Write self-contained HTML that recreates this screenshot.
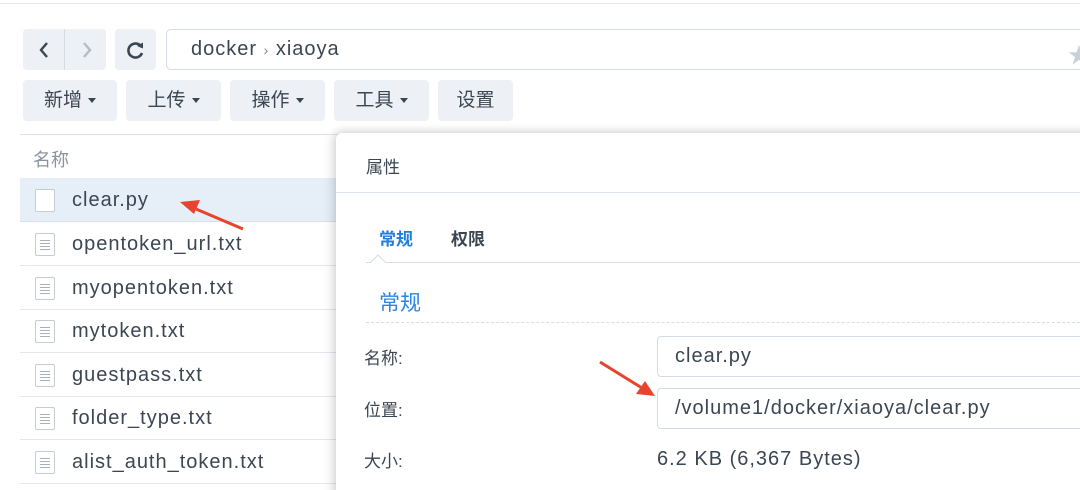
<!DOCTYPE html>
<html><head><meta charset="utf-8"><style>
*{box-sizing:border-box;margin:0;padding:0}
html,body{width:1080px;height:490px;overflow:hidden}
body{background:#fff;font-family:"Liberation Sans","Noto Sans CJK SC",sans-serif;color:#3b4653;position:relative}
.a{position:absolute}
.btn{position:absolute;background:#edf0f4;border-radius:4px;height:41px;top:80px;font-size:19px;line-height:41px;text-align:center;color:#3b4653}
.caret{display:inline-block;width:0;height:0;border-left:4px solid transparent;border-right:4px solid transparent;border-top:5px solid #3b4653;vertical-align:middle;margin-left:6px}
.row{position:absolute;left:20px;width:316px;height:44px;border-bottom:1px solid #e3e8ee;font-size:20px;letter-spacing:1px;line-height:44px;padding-left:52px;color:#3b4653}
.ic{position:absolute;left:15px;top:11px;width:20px;height:23px;border:1px solid #c6ccd3;border-radius:2px;background:#fff}
.ic i{position:absolute;left:4px;width:10px;height:1px;background:#a8b0b9}
.lbl{position:absolute;left:364px;font-size:17px;color:#3b4653}
.inp{position:absolute;left:657px;width:440px;height:41px;border:1px solid #d5dbe2;border-radius:4px;font-size:20px;letter-spacing:1px;line-height:39px;padding-left:17px;color:#3b4653}
</style></head><body>
<div class="a" style="left:0;top:3px;width:1080px;height:1px;background:#e3e8ee"></div>
<div class="a" style="left:23px;top:29px;width:83px;height:41px;background:#edf0f4;border-radius:4px"></div>
<div class="a" style="left:64px;top:29px;width:1px;height:41px;background:#d5dbe2"></div>
<svg class="a" style="left:37px;top:40px" width="14" height="20"><path d="M10 3 L4 10 L10 17" stroke="#3b4653" stroke-width="2.4" fill="none"/></svg>
<svg class="a" style="left:80px;top:40px" width="14" height="20"><path d="M4 3 L10 10 L4 17" stroke="#b4bcc5" stroke-width="2.4" fill="none"/></svg>
<div class="a" style="left:115px;top:29px;width:41px;height:41px;background:#edf0f4;border-radius:4px"></div>
<svg class="a" style="left:126px;top:40px" width="20" height="20"><path d="M15.5 7 A7 7 0 1 0 16 13" stroke="#3b4653" stroke-width="2.6" fill="none"/><path d="M11 6 L17 2.5 L17 8.5 Z" fill="#3b4653"/></svg>
<div class="a" style="left:166px;top:29px;width:930px;height:41px;border:1px solid #d5dbe2;border-radius:5px;font-size:20px;letter-spacing:1px;line-height:39px;padding-left:24px;color:#3b4653">docker <span style="font-size:14px;color:#7a8592">›</span> xiaoya</div>
<div class="a" style="left:1068px;top:38px;font-size:22px;color:#c8d0d9">★</div>
<div class="btn" style="left:23px;width:94px">新增<span class="caret"></span></div>
<div class="btn" style="left:126px;width:95px">上传<span class="caret"></span></div>
<div class="btn" style="left:230px;width:95px">操作<span class="caret"></span></div>
<div class="btn" style="left:334px;width:95px">工具<span class="caret"></span></div>
<div class="btn" style="left:438px;width:75px">设置</div>
<div class="a" style="left:20px;top:134px;width:330px;height:1px;background:#dfe4ea"></div>
<div class="a" style="left:33px;top:146px;font-size:18px;color:#8a949f">名称</div>
<div class="row" style="top:178px;background:#e6eef8;border-bottom-color:#d7e1ee"><div class="ic"></div>clear.py</div>
<div class="row" style="top:222px"><div class="ic"><i style="top:6px"></i><i style="top:9px"></i><i style="top:12px"></i><i style="top:15px"></i></div>opentoken_url.txt</div>
<div class="row" style="top:266px"><div class="ic"><i style="top:6px"></i><i style="top:9px"></i><i style="top:12px"></i><i style="top:15px"></i></div>myopentoken.txt</div>
<div class="row" style="top:309px"><div class="ic"><i style="top:6px"></i><i style="top:9px"></i><i style="top:12px"></i><i style="top:15px"></i></div>mytoken.txt</div>
<div class="row" style="top:353px"><div class="ic"><i style="top:6px"></i><i style="top:9px"></i><i style="top:12px"></i><i style="top:15px"></i></div>guestpass.txt</div>
<div class="row" style="top:396px"><div class="ic"><i style="top:6px"></i><i style="top:9px"></i><i style="top:12px"></i><i style="top:15px"></i></div>folder_type.txt</div>
<div class="row" style="top:440px"><div class="ic"><i style="top:6px"></i><i style="top:9px"></i><i style="top:12px"></i><i style="top:15px"></i></div>alist_auth_token.txt</div>
<div class="a" style="left:336px;top:133px;width:760px;height:370px;background:#fff;border-radius:6px 0 0 0;box-shadow:-4px 0 10px rgba(0,0,0,0.12),0 -3px 8px rgba(0,0,0,0.08)"></div>
<div class="a" style="left:366px;top:153px;font-size:17px;color:#3b4653">属性</div>
<div class="a" style="left:336px;top:192px;width:744px;height:1px;background:#dde4ec"></div>
<div class="a" style="left:379px;top:225px;font-size:17px;color:#1f7fe0;font-weight:bold">常规</div>
<div class="a" style="left:451px;top:225px;font-size:17px;color:#3b4653;font-weight:bold">权限</div>
<div class="a" style="left:366px;top:262px;width:714px;height:1px;background:#d5dde6"></div>
<svg class="a" style="left:370px;top:252px" width="16" height="11"><path d="M0 11 L8 3 L16 11" fill="#fff" stroke="#d5dde6"/></svg>
<div class="a" style="left:379px;top:287px;font-size:21px;color:#2b86e3">常规</div>
<div class="a" style="left:366px;top:322px;width:714px;border-top:1px dashed #d5dde6"></div>
<div class="lbl" style="top:344px">名称:</div>
<div class="lbl" style="top:396px">位置:</div>
<div class="lbl" style="top:447px">大小:</div>
<div class="inp" style="top:336px">clear.py</div>
<div class="inp" style="top:388px">/volume1/docker/xiaoya/clear.py</div>
<div class="a" style="left:657px;top:448px;font-size:20px;letter-spacing:1px;color:#3b4653">6.2 KB (6,367 Bytes)</div>
<svg class="a" style="left:0;top:0" width="1080" height="490">
<path d="M243 229 L196 209" stroke="#e8432e" stroke-width="3"/><path d="M180 202 L200 200 L194 214 Z" fill="#e8432e"/>
<path d="M600 362 L642 388" stroke="#e8432e" stroke-width="3"/><path d="M655 396 L636 394 L645 381 Z" fill="#e8432e"/>
</svg>
</body></html>
